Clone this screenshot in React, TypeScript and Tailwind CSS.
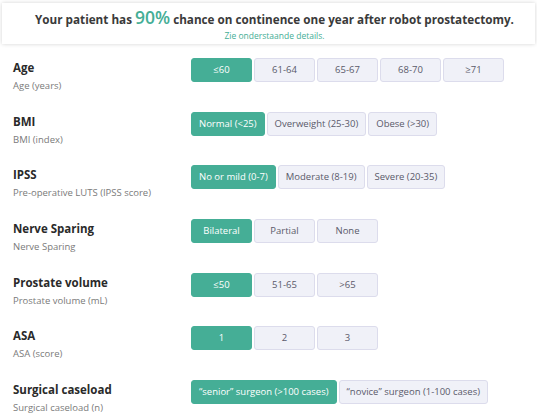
import React from "react";

const rows: { title: string; sub: string; options: string[] }[] = [
  { title: "Age", sub: "Age (years)", options: ["≤60", "61-64", "65-67", "68-70", "≥71"] },
  { title: "BMI", sub: "BMI (index)", options: ["Normal (<25)", "Overweight (25-30)", "Obese (>30)"] },
  { title: "IPSS", sub: "Pre-operative LUTS (IPSS score)", options: ["No or mild (0-7)", "Moderate (8-19)", "Severe (20-35)"] },
  { title: "Nerve Sparing", sub: "Nerve Sparing", options: ["Bilateral", "Partial", "None"] },
  { title: "Prostate volume", sub: "Prostate volume (mL)", options: ["≤50", "51-65", ">65"] },
  { title: "ASA", sub: "ASA (score)", options: ["1", "2", "3"] },
  { title: "Surgical caseload", sub: "Surgical caseload (n)", options: ["\u201csenior\u201d surgeon (>100 cases)", "\u201cnovice\u201d surgeon (1-100 cases)"] },
];

export default function App() {
  return (
    <div className="w-[537px] h-[416px] overflow-hidden bg-white" style={{ fontFamily: "'Open Sans', sans-serif" }}>
      <div className="pt-[3px] pl-[2px] w-[535px]">
        <div className="h-[41px] bg-white shadow-[0_0_4px_rgba(0,0,0,0.18)] flex flex-col items-center pl-[12px]">
          <div className="text-[11.7px] font-bold text-[#3a3a3a] leading-[20px] mt-[4px] flex items-baseline whitespace-nowrap">
            <span>Your patient has&nbsp;</span>
            <span className="text-[17.5px] font-semibold text-[#45ae96] leading-[20px]">90%</span>
            <span>&nbsp;chance on continence one year after robot prostatectomy.</span>
          </div>
          <div className="text-[8.5px] text-[#45ae96] leading-[12px] mt-[1px] whitespace-nowrap">Zie onderstaande details.</div>
        </div>
      </div>
      <div className="mt-[14px]">
        {rows.map((r) => (
          <div key={r.title} className="flex h-[53.67px]">
            <div className="w-[191px] pl-[13px] pt-[1px]">
              <div className="text-[11.5px] font-bold text-[#2a2a2a] leading-[18px]">{r.title}</div>
              <div className="text-[9.5px] text-[#7a7a7a] leading-[15px] mt-[1px]">{r.sub}</div>
            </div>
            <div className="flex gap-[2px] items-start">
              {r.options.map((o, i) => (
                <div
                  key={o}
                  className={
                    i === 0
                      ? "h-[24px] min-w-[61px] px-[7px] rounded-[3px] bg-[#45ae96] border border-[#45ae96] text-white text-[9.5px] flex items-center justify-center whitespace-nowrap"
                      : "h-[24px] min-w-[61px] px-[7px] rounded-[3px] bg-[#f0f1f8] border border-[#dcdcec] text-[#5a5a6a] text-[9.5px] flex items-center justify-center whitespace-nowrap"
                  }
                >
                  {o}
                </div>
              ))}
            </div>
          </div>
        ))}
      </div>
    </div>
  );
}
